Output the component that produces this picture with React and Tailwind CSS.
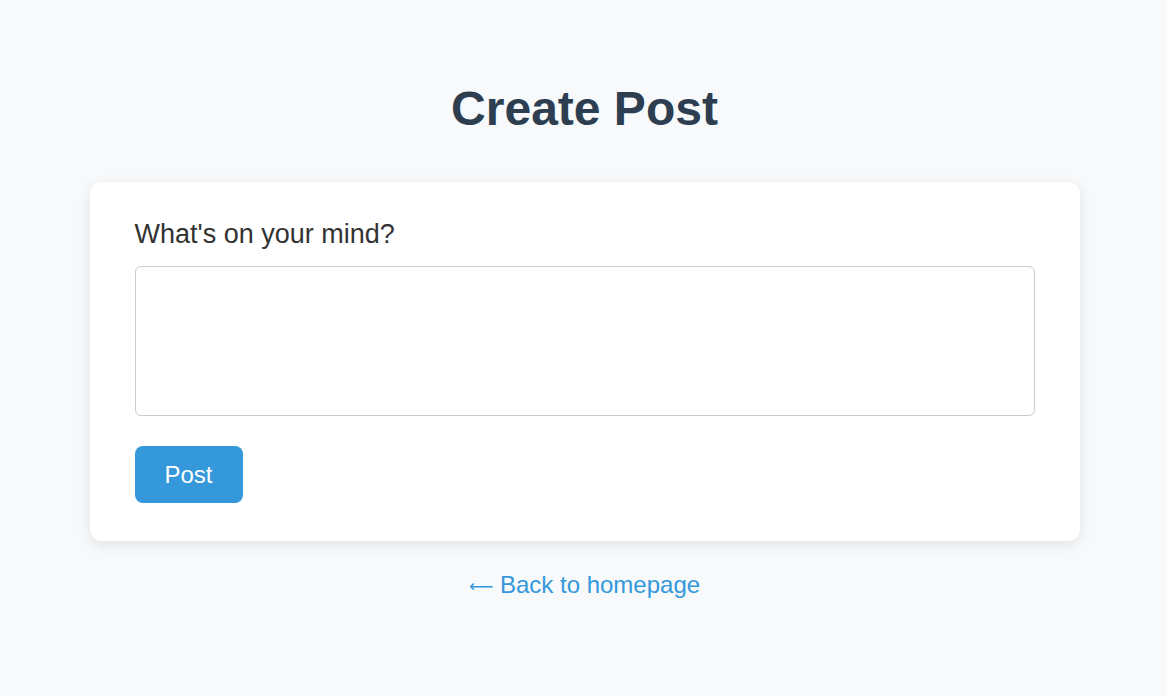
export default function App() {
  return (
    <div className="min-h-screen bg-[#f7f9fb] pl-[2px] font-['Liberation_Sans',Arial,sans-serif]">
      <div className="mx-auto w-[990px] pt-[81px]">
        <h1 className="text-center text-[48px] font-bold leading-[55px] text-[#2c3e50]">
          Create Post
        </h1>

        <div className="mt-[46px] rounded-[12px] bg-white px-[45px] pt-[37px] pb-[38px] shadow-[0_4px_14px_rgba(0,0,0,0.09)]">
          <label className="block text-[27px] leading-[31px] text-[#333]">
            What's on your mind?
          </label>
          <textarea className="mt-[16px] block h-[150px] w-full resize-none rounded-[6px] border border-[#ccc] bg-white p-3 outline-none" />
          <button
            type="button"
            className="mt-[30px] h-[57px] w-[108px] rounded-[8px] bg-[#3498db] text-[24px] text-white"
          >
            Post
          </button>
        </div>

        <div className="mt-[30px] text-center">
          <a href="#" className="text-[24px] leading-[28px] text-[#3498db]">
            <span className="relative top-[-1px] font-['DejaVu_Sans',sans-serif] text-[17px]">⟵</span> Back to homepage
          </a>
        </div>
      </div>
    </div>
  )
}
